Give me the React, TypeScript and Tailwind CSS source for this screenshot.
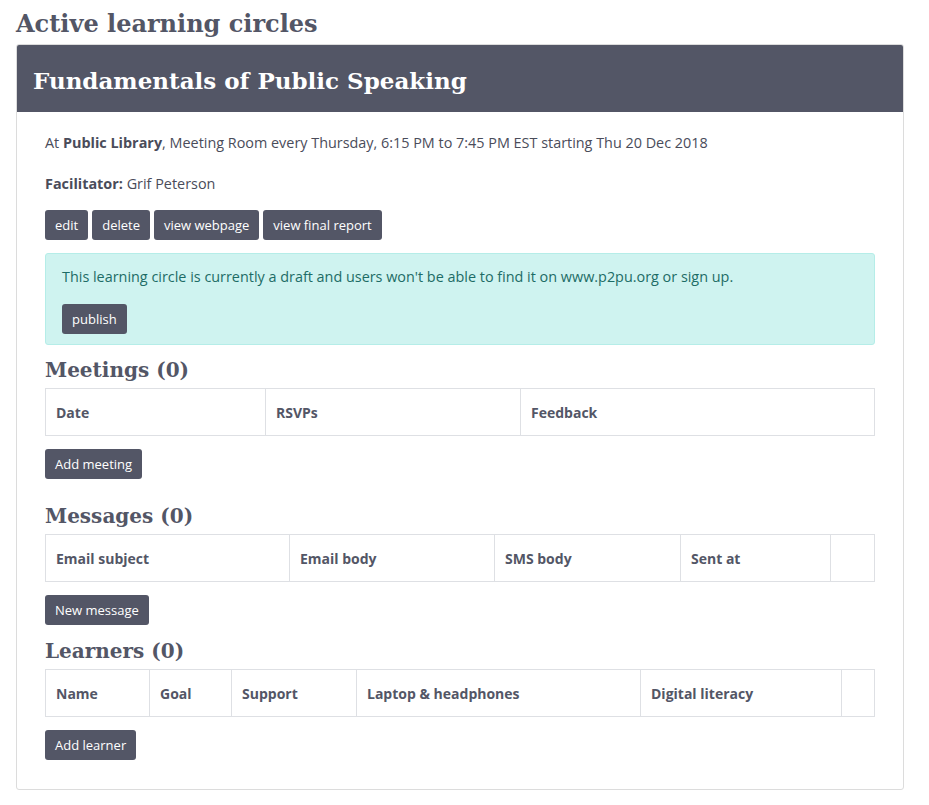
const SLAB = { fontFamily: '"DejaVu Serif", "Liberation Serif", serif' };

const TABLES = [
  {
    title: 'Meetings (0)',
    mt: 'mt-[10px]',
    cols: [
      { label: 'Date', w: 'w-[219px]' },
      { label: 'RSVPs', w: 'w-[255px]' },
      { label: 'Feedback', w: '' },
    ],
    button: 'Add meeting',
  },
  {
    title: 'Messages (0)',
    mt: 'mt-[22px]',
    cols: [
      { label: 'Email subject', w: 'w-[243px]' },
      { label: 'Email body', w: 'w-[205px]' },
      { label: 'SMS body', w: 'w-[186px]' },
      { label: 'Sent at', w: 'w-[150px]' },
      { label: '', w: '' },
    ],
    button: 'New message',
  },
  {
    title: 'Learners (0)',
    mt: 'mt-[11px]',
    cols: [
      { label: 'Name', w: 'w-[103px]' },
      { label: 'Goal', w: 'w-[82px]' },
      { label: 'Support', w: 'w-[125px]' },
      { label: 'Laptop & headphones', w: 'w-[284px]' },
      { label: 'Digital literacy', w: 'w-[201px]' },
      { label: '', w: '' },
    ],
    button: 'Add learner',
  },
];

function Btn({ children }: { children: React.ReactNode }) {
  return (
    <button className="h-[30px] px-[10px] rounded-[3px] bg-[#535666] text-white text-[13px] leading-none">
      {children}
    </button>
  );
}

function Section({ t }: { t: (typeof TABLES)[number] }) {
  return (
    <div className={t.mt}>
      <h3 className="text-[20px] leading-[30px] font-bold text-[#535666]" style={SLAB}>
        {t.title}
      </h3>
      <div className="mt-[3px] flex border border-[#dee0e4] h-[48px]">
        {t.cols.map((c, i) => (
          <div
            key={i}
            className={`${c.w} ${c.w ? 'shrink-0' : 'flex-1'} ${i > 0 ? 'border-l border-[#dee0e4]' : ''} flex items-center px-[10px] text-[14px] font-bold text-[#535666]`}
          >
            {c.label}
          </div>
        ))}
      </div>
      <div className="mt-[13px]">
        <Btn>{t.button}</Btn>
      </div>
    </div>
  );
}

export default function App() {
  return (
    <div className="w-[929px] h-[805px] bg-white" style={{ fontFamily: '"Open Sans", "Noto Sans", sans-serif' }}>
      <div className="pl-[16px] pr-[25px]">
        <h2 className="pt-[6px] text-[24px] leading-[36px] font-bold text-[#535666]" style={SLAB}>
          Active learning circles
        </h2>
        <div className="mt-[2px] w-[888px] border border-[#dcdcdc] rounded-[3px] overflow-hidden">
          <div className="h-[67px] bg-[#535666] flex items-center px-[16px] pt-[5px]">
            <h1 className="text-[23px] font-bold text-white" style={SLAB}>
              Fundamentals of Public Speaking
            </h1>
          </div>
          <div className="px-[28px] pt-[20px] pb-[29px] text-[14.4px] text-[#4a4c5a]">
            <p className="leading-[22px]">
              At <b>Public Library</b>, Meeting Room every Thursday, 6:15 PM to 7:45 PM EST starting Thu 20 Dec 2018
            </p>
            <p className="mt-[19px] leading-[22px]">
              <b>Facilitator:</b> Grif Peterson
            </p>
            <div className="mt-[15px] flex gap-[4px]">
              <Btn>edit</Btn>
              <Btn>delete</Btn>
              <Btn>view webpage</Btn>
              <Btn>view final report</Btn>
            </div>
            <div className="mt-[13px] w-[830px] rounded-[3px] border border-[#b5ede8] bg-[#cff3f0] px-[16px] pt-[12px] pb-[10px] text-[#1d6c66]">
              <p className="leading-[22px]">
                This learning circle is currently a draft and users won't be able to find it on www.p2pu.org or sign up.
              </p>
              <div className="mt-[16px]">
                <Btn>publish</Btn>
              </div>
            </div>
            {TABLES.map((t) => (
              <Section key={t.title} t={t} />
            ))}
          </div>
        </div>
      </div>
    </div>
  );
}
